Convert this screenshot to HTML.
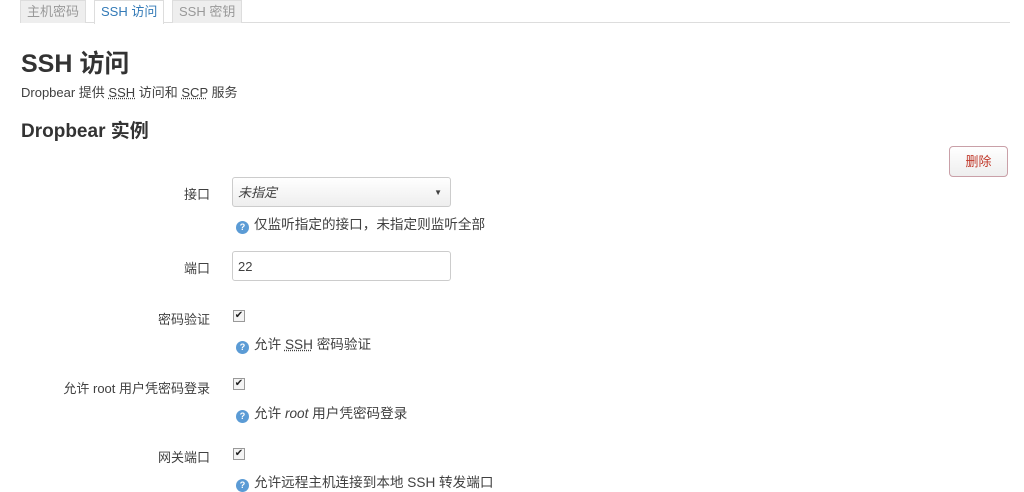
<!DOCTYPE html>
<html><head><meta charset="utf-8"><style>
body{margin:0;width:1024px;height:488px;overflow:hidden;background:#fff;font-family:"Liberation Sans","Noto Sans CJK SC",sans-serif;color:#404040;position:relative}
.a{position:absolute;white-space:nowrap}
.tab{position:absolute;top:0;height:22px;line-height:22px;font-size:13px;padding:0 6px;background:#eee;color:#999;border:1px solid #ddd;border-bottom:none}
.lbl{font-size:13px;color:#404040;text-align:right;right:814px}
.hint{font-size:13.6px;color:#404040}
.q{display:inline-block;width:13px;height:13px;border-radius:50%;background:#5b9bd5;color:#fff;font-size:9px;line-height:13px;text-align:center;vertical-align:-1px;margin-right:5px;font-weight:bold}
.cb{position:absolute;width:10px;height:10px;border:1px solid #999;background:#f4f4f4;font-size:10px;line-height:10px;text-align:center;color:#222}
abbr{text-decoration:underline dotted}
</style></head><body>
<div style="position:absolute;left:20px;top:22px;width:990px;border-top:1px solid #ddd"></div>
<div class="tab" style="left:20px">主机密码</div>
<div class="tab" style="left:94px;background:#fff;color:#337ab7;height:23px">SSH 访问</div>
<div class="tab" style="left:172px">SSH 密钥</div>
<div class="a" style="left:21px;top:44px;font-size:25px;font-weight:bold;color:#333">SSH 访问</div>
<div class="a" style="left:21px;top:82px;font-size:13px">Dropbear 提供 <abbr>SSH</abbr> 访问和 <abbr>SCP</abbr> 服务</div>
<div class="a" style="left:21px;top:116px;font-size:19px;font-weight:bold;color:#333">Dropbear 实例</div>
<div class="a" style="left:949px;top:146px;width:57px;height:29px;border:1px solid #c9a0a8;border-radius:4px;background:linear-gradient(#fff,#eee);color:#c0392b;font-size:13px;line-height:29px;text-align:center">删除</div>
<div class="a lbl" style="top:184px">接口</div>
<div class="a" style="left:232px;top:177px;width:219px;height:30px;border:1px solid #ccc;border-radius:3px;background:linear-gradient(#fff,#eee);font-size:13px;line-height:30px;font-style:italic;padding-left:5px;box-sizing:border-box">未指定<span style="position:absolute;right:8px;font-style:normal;font-size:8px">▼</span></div>
<div class="a hint" style="left:236px;top:213px"><span class="q">?</span>仅监听指定的接口，未指定则监听全部</div>
<div class="a lbl" style="top:258px">端口</div>
<div class="a" style="left:232px;top:251px;width:219px;height:30px;border:1px solid #ccc;border-radius:3px;font-size:13px;line-height:30px;padding-left:5px;box-sizing:border-box">22</div>
<div class="a lbl" style="top:309px">密码验证</div>
<div class="cb" style="left:233px;top:310px">✔</div>
<div class="a hint" style="left:236px;top:333px"><span class="q">?</span>允许 <abbr>SSH</abbr> 密码验证</div>
<div class="a lbl" style="top:378px">允许 root 用户凭密码登录</div>
<div class="cb" style="left:233px;top:378px">✔</div>
<div class="a hint" style="left:236px;top:402px"><span class="q">?</span>允许 <i>root</i> 用户凭密码登录</div>
<div class="a lbl" style="top:447px">网关端口</div>
<div class="cb" style="left:233px;top:448px">✔</div>
<div class="a hint" style="left:236px;top:471px"><span class="q">?</span>允许远程主机连接到本地 SSH 转发端口</div>
</body></html>
